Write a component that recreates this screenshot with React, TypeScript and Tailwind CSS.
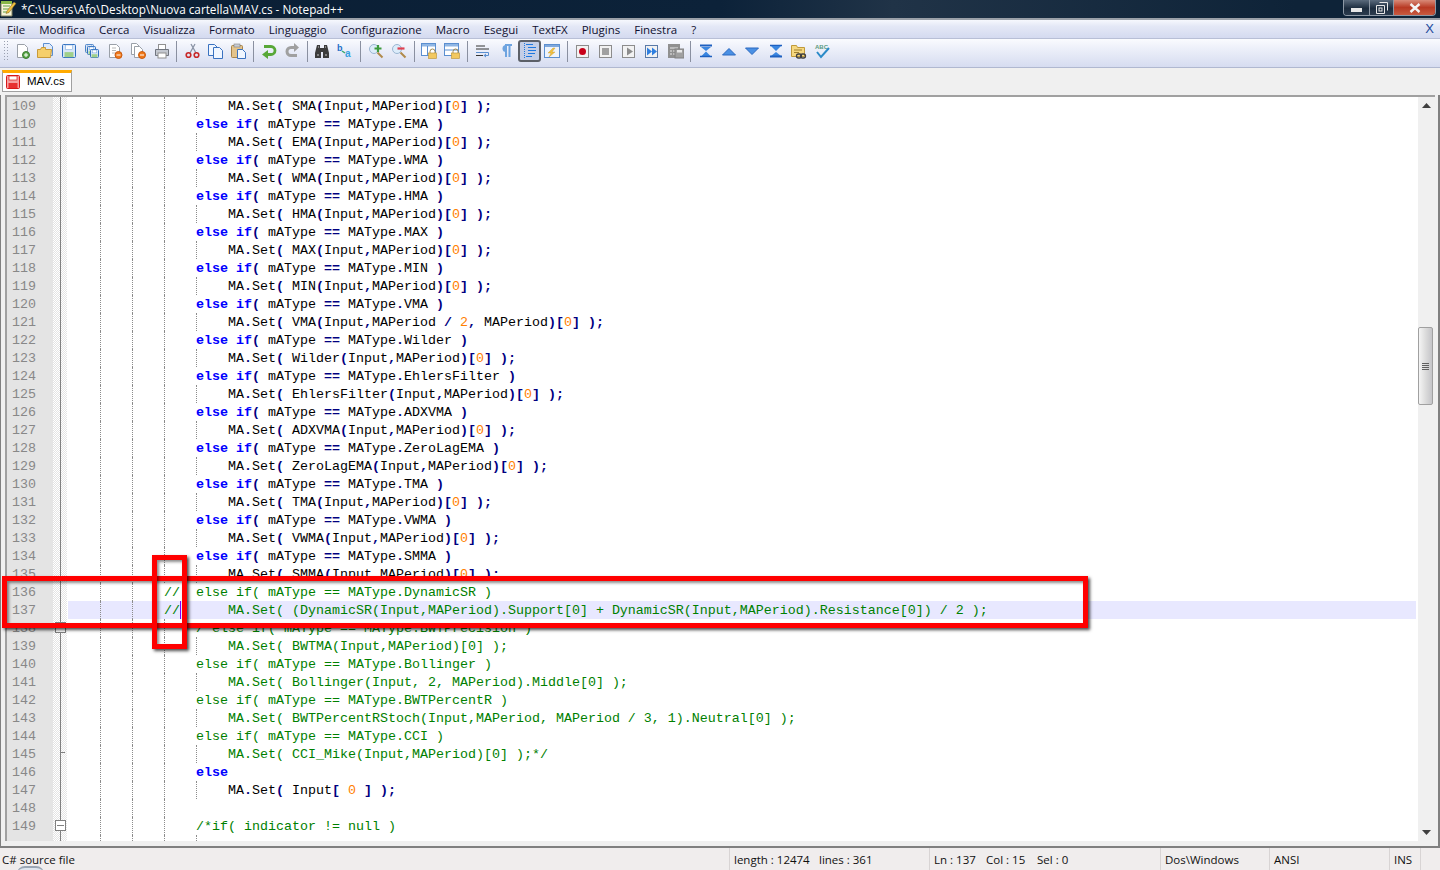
import type { ReactNode } from 'react';

const menus = ['File', 'Modifica', 'Cerca', 'Visualizza', 'Formato', 'Linguaggio', 'Configurazione', 'Macro', 'Esegui', 'TextFX', 'Plugins', 'Finestra', '?'];

type Kind = 'code' | 'comment';
interface Line {
  n: number;
  text: string;
  kind?: Kind;
}

const setLine = (s: string) => `                    MA.Set( ${s} );`;
const elseLine = (s: string) => `                else if( mAType == MAType.${s} )`;

const pairs: [string, string][] = [
  ['EMA', 'EMA(Input,MAPeriod)[0]'],
  ['WMA', 'WMA(Input,MAPeriod)[0]'],
  ['HMA', 'HMA(Input,MAPeriod)[0]'],
  ['MAX', 'MAX(Input,MAPeriod)[0]'],
  ['MIN', 'MIN(Input,MAPeriod)[0]'],
  ['VMA', 'VMA(Input,MAPeriod / 2, MAPeriod)[0]'],
  ['Wilder', 'Wilder(Input,MAPeriod)[0]'],
  ['EhlersFilter', 'EhlersFilter(Input,MAPeriod)[0]'],
  ['ADXVMA', 'ADXVMA(Input,MAPeriod)[0]'],
  ['ZeroLagEMA', 'ZeroLagEMA(Input,MAPeriod)[0]'],
  ['TMA', 'TMA(Input,MAPeriod)[0]'],
  ['VWMA', 'VWMA(Input,MAPeriod)[0]'],
  ['SMMA', 'SMMA(Input,MAPeriod)[0]'],
];

const lines: Line[] = [{ n: 109, text: setLine('SMA(Input,MAPeriod)[0]') }];
pairs.forEach(([name, call], i) => {
  lines.push({ n: 110 + i * 2, text: elseLine(name) });
  lines.push({ n: 111 + i * 2, text: setLine(call) });
});
lines.push(
  { n: 136, text: '            //  else if( mAType == MAType.DynamicSR )', kind: 'comment' },
  { n: 137, text: '            //      MA.Set( (DynamicSR(Input,MAPeriod).Support[0] + DynamicSR(Input,MAPeriod).Resistance[0]) / 2 );', kind: 'comment' },
  { n: 138, text: '                /*else if( mAType == MAType.BWTPrecision )', kind: 'comment' },
  { n: 139, text: setLine('BWTMA(Input,MAPeriod)[0]'), kind: 'comment' },
  { n: 140, text: elseLine('Bollinger'), kind: 'comment' },
  { n: 141, text: setLine('Bollinger(Input, 2, MAPeriod).Middle[0]'), kind: 'comment' },
  { n: 142, text: elseLine('BWTPercentR'), kind: 'comment' },
  { n: 143, text: setLine('BWTPercentRStoch(Input,MAPeriod, MAPeriod / 3, 1).Neutral[0]'), kind: 'comment' },
  { n: 144, text: elseLine('CCI'), kind: 'comment' },
  { n: 145, text: setLine('CCI_Mike(Input,MAPeriod)[0]') + '*/', kind: 'comment' },
  { n: 146, text: '                else' },
  { n: 147, text: '                    MA.Set( Input[ 0 ] );' },
  { n: 148, text: '' },
  { n: 149, text: '                /*if( indicator != null )', kind: 'comment' },
  { n: 150, text: '' },
);

function CodeText({ line }: { line: Line }) {
  if (line.kind === 'comment') {
    return <span className="text-[#008000]">{line.text}</span>;
  }
  const parts = line.text.split(/(\belse\b|\bif\b|[()[\],;.=+/]+|\b\d+\b)/);
  return (
    <>
      {parts.map((p, i) => {
        if (p === 'else' || p === 'if') return <span key={i} className="font-bold text-[#0000ff]">{p}</span>;
        if (/^\d+$/.test(p)) return <span key={i} className="text-[#ff8000]">{p}</span>;
        if (/^[()[\],;.=+/]+$/.test(p)) return <span key={i} className="font-bold text-[#000080]">{p}</span>;
        return <span key={i} className="text-black">{p}</span>;
      })}
    </>
  );
}

function Guide({ at }: { at: 32 | 64 | 96 | 128 }) {
  const left = { 32: 'left-[32px]', 64: 'left-[64px]', 96: 'left-[96px]', 128: 'left-[128px]' }[at];
  return <span className={`absolute top-0 h-full border-l border-dotted border-[#8c8c8c] ${left}`} />;
}

function Row({ line }: { line: Line }) {
  const deep = line.text.startsWith('                    ') || line.n === 150;
  const current = line.n === 137;
  return (
    <div className="flex h-[18px] shrink-0 leading-[20px]">
      <div className="w-[46px] shrink-0 bg-[#e4e4e4] pl-[5px] text-[#888888]">{line.n < 150 ? line.n : ''}</div>
      <div className="relative w-[14px] shrink-0 bg-[repeating-conic-gradient(#e4e4e4_0_25%,#ffffff_0_50%)] bg-[length:2px_2px]">
        <span className="absolute left-[7px] top-0 h-full w-px bg-[#808080]" />
        {line.n === 145 && <span className="absolute left-[7px] top-[7px] h-px w-[5px] bg-[#808080]" />}
        {(line.n === 138 || line.n === 149) && (
          <span className="absolute left-[2px] top-[3px] flex h-[11px] w-[11px] items-center justify-center border border-[#808080] bg-white">
            <span className="h-px w-[7px] bg-[#808080]" />
          </span>
        )}
      </div>
      <div className="w-px shrink-0 bg-white" />
      <div className={`relative mr-[2px] flex-1 whitespace-pre ${current ? 'bg-[#e8e8ff]' : ''}`}>
        <Guide at={32} />
        <Guide at={64} />
        {line.n !== 136 && line.n !== 137 && <Guide at={96} />}
        {deep && <Guide at={128} />}
        <CodeText line={line} />
        {current && <span className="absolute left-[112px] top-0 h-full w-px bg-[#8000ff]" />}
      </div>
    </div>
  );
}

function Svg({ children }: { children: ReactNode }) {
  return (
    <svg width="16" height="16" viewBox="0 0 16 16" fill="none">
      {children}
    </svg>
  );
}

const Doc = ({ x = 2, y = 1, w = 9, h = 12, c = '#9aa0a8', f = '#ffffff' }) => (
  <path d={`M${x + 0.5} ${y + 0.5}h${w - 3}l3 3v${h - 3}h-${w}z`} fill={f} stroke={c} />
);
const Disk = ({ x = 1, y = 1, s = 14 }) => (
  <g>
    <rect x={x + 0.5} y={y + 0.5} width={s - 1} height={s - 1} rx="1" fill="#d8e6f8" stroke="#2f6fc0" />
    <rect x={x + s * 0.25} y={y + 1} width={s * 0.5} height={s * 0.32} fill="#ffffff" stroke="#6f9fd8" strokeWidth="0.5" />
    <rect x={x + s * 0.18} y={y + s * 0.58} width={s * 0.64} height={s * 0.36} fill="#9fd08a" />
  </g>
);
const Lock = () => (
  <g>
    <path d="M9 10V8.5a2.5 2.5 0 0 1 5 0V10" stroke="#a08850" fill="none" />
    <rect x="7.5" y="10" width="8" height="5.5" fill="#f2c860" stroke="#c09a40" strokeWidth="0.7" />
  </g>
);
const Glass = ({ children }: { children: ReactNode }) => (
  <g>
    <circle cx="6" cy="6" r="4.5" fill="#dcecfa" stroke="#9bb6d2" />
    <path d="M9.5 9.5l5 5" stroke="#b08a4a" strokeWidth="2" />
    {children}
  </g>
);
const MacroBox = ({ children, c = '#8c8c8c' }: { children: ReactNode; c?: string }) => (
  <g>
    <rect x="1.5" y="2.5" width="12" height="12" fill="#f2f2f2" stroke={c} />
    {children}
  </g>
);

const icons: Record<string, ReactNode> = {
  new: (<Svg><Doc x={3} y={1} w={10} h={13} /><circle cx="12" cy="12" r="3.5" fill="#5aa848" stroke="#3a7a30" /><path d="M10 12h4M12 10v4" stroke="#fff" /></Svg>),
  open: (<Svg><Doc x={6} y={0} w={9} h={12} c="#5b8fd0" f="#dfeafa" /><path d="M.5 6.5h3l1-2h4v2h6l-1 8H.5z" fill="#f6cf6b" stroke="#c89a3a" /></Svg>),
  save: (<Svg><Disk /></Svg>),
  saveAll: (<Svg><g opacity="0.85"><Disk x={1} y={1} s={9} /></g><Disk x={3} y={3} s={9} /><Disk x={6} y={6} s={9} /></Svg>),
  close: (<Svg><Doc x={2} y={1} w={10} h={13} /><path d="M5 5h4M5 7.5h4M5 10h3" stroke="#b8b8b8" /><circle cx="11.5" cy="12" r="3.5" fill="#f07818" stroke="#c85a10" /><path d="M9.5 12h4" stroke="#fff" /></Svg>),
  closeAll: (<Svg><Doc x={1} y={0} w={8} h={11} /><Doc x={4} y={3} w={8} h={11} /><circle cx="12" cy="12" r="3.5" fill="#f07818" stroke="#c85a10" /><path d="M10 12h4" stroke="#fff" /></Svg>),
  print: (<Svg><rect x="4.5" y="1.5" width="7" height="5" fill="#fff" stroke="#909090" /><path d="M1.5 6.5h13v6h-13z" fill="#c4c8d0" stroke="#70757f" /><rect x="4" y="10" width="8" height="5" fill="#fff" stroke="#909090" /></Svg>),
  cut: (<Svg><path d="M11 1L6 10M7 1l5 9" stroke="#8a93a5" strokeWidth="1.3" /><circle cx="4.5" cy="12" r="2.3" stroke="#c82828" strokeWidth="1.6" /><circle cx="12.5" cy="12" r="2.3" stroke="#c82828" strokeWidth="1.6" /></Svg>),
  copy: (<Svg><Doc x={1} y={1} w={9} h={11} c="#3a72c0" f="#f0f6ff" /><Doc x={6} y={4} w={9} h={11} c="#3a72c0" f="#f0f6ff" /></Svg>),
  paste: (<Svg><rect x="1.5" y="2.5" width="11" height="12" rx="1" fill="#e4c48c" stroke="#a8844a" /><rect x="4" y="1" width="6" height="3" fill="#c8ccd4" stroke="#808080" strokeWidth="0.6" /><Doc x={7} y={6} w={8} h={9} c="#3a72c0" f="#f0f6ff" /></Svg>),
  undo: (<Svg><path d="M3 3.500h7a4 4 0 0 1 0 8H6" stroke="#58a838" strokeWidth="2.800" /><path d="M7 7v9L1 11.500z" fill="#58a838" /></Svg>),
  redo: (<Svg><path d="M11 4.500H7a4 4 0 0 0 0 8h6" stroke="#a0a0a0" strokeWidth="3" /><path d="M10 0v9l5-4.500z" fill="#a0a0a0" /></Svg>),
  find: (<Svg><path d="M3 2h3v3h4V2h3l2 8v5H9V9H7v6H1v-5z" fill="#3c3c3c" /><path d="M3 12h2M11 12h2M4 4h1M11 4h1" stroke="#c8c8c8" /></Svg>),
  replace: (<Svg><text x="0" y="8" fontSize="9" fontWeight="700" fill="#1c6fc8" fontFamily="Liberation Sans">b</text><text x="8" y="14" fontSize="10" fontWeight="700" fill="#38a0e0" fontFamily="Liberation Sans">a</text><path d="M5 8l3 2" stroke="#38a870" strokeWidth="1.500" /></Svg>),
  zoomIn: (<Svg><Glass><path d="M6.5 5.5h7M10 2v7" stroke="#3c9a3c" strokeWidth="2.2" /></Glass></Svg>),
  zoomOut: (<Svg><Glass><path d="M6.5 5.5h7" stroke="#e04050" strokeWidth="2.2" /></Glass></Svg>),
  syncV: (<Svg><rect x="0.5" y="0.5" width="14" height="12" fill="#fff" stroke="#5b8fd0" /><rect x="1" y="1" width="13" height="2.5" fill="#8fb6e4" /><path d="M6.5 3v9" stroke="#5b8fd0" /><Lock /></Svg>),
  syncH: (<Svg><rect x="0.5" y="0.5" width="14" height="12" fill="#fff" stroke="#5b8fd0" /><rect x="1" y="1" width="13" height="2.5" fill="#8fb6e4" /><path d="M1 7h13" stroke="#5b8fd0" /><Lock /></Svg>),
  wrap: (<Svg><path d="M1 3h9M1 6h13M1 12.500h7" stroke="#333" /><path d="M1 9.500h12.500v3H10" stroke="#5b8fd0" /><path d="M11 10.500v4L8.500 12.500z" fill="#5b8fd0" /></Svg>),
  pilcrow: (<Svg><path d="M7 2h7M8 2v12M11.500 2v12" stroke="#6ea4e0" strokeWidth="2" /><path d="M8 2a3.500 3.500 0 0 0 0 7z" fill="#6ea4e0" /></Svg>),
  guide: (<Svg><path d="M5 1.500h7M7 4.500h8M7 7.500h8M7 10.500h7M5 13.500h6" stroke="#1e78e0" strokeWidth="1.2" /><path d="M3.500 0v16" stroke="#1e78e0" strokeDasharray="1 1" /></Svg>),
  lang: (<Svg><rect x="0.5" y="1.5" width="15" height="13" fill="#eef4fc" stroke="#5b8fd0" /><rect x="1" y="2" width="14" height="2" fill="#7fa8dc" /><path d="M9 5L4 10h3l-2 4 6-5H8l3-4z" fill="#f0c040" stroke="#c89a30" strokeWidth="0.4" /></Svg>),
  rec: (<Svg><MacroBox><circle cx="7.500" cy="8.500" r="3.500" fill="#c80018" /></MacroBox></Svg>),
  stop: (<Svg><MacroBox><rect x="4" y="5" width="7" height="7" fill="#a0a0a0" /></MacroBox></Svg>),
  play: (<Svg><MacroBox><path d="M6 4.500v8l6-4z" fill="#8c8c8c" /></MacroBox></Svg>),
  playMany: (<Svg><MacroBox c="#5a7aa8"><path d="M3 4.500v8l5-4zM8 4.500v8l5-4z" fill="#2f7fe0" /></MacroBox></Svg>),
  saveMacro: (<Svg><rect x="0" y="1" width="12" height="14" fill="#909090" /><path d="M2 5h8M2 8h2M5 8h2M2 11h2M5 11h2" stroke="#e8e8e8" /><rect x="7" y="6" width="9" height="9" fill="#a0a0a0" stroke="#808080" /><rect x="9" y="7" width="5" height="2.500" fill="#e8e8e8" /></Svg>),
  first: (<Svg><path d="M2 2.500h12" stroke="#1e60c0" strokeWidth="2" /><path d="M3 4l5 4 5-4zM3 13.500l5-5 5 5z" fill="#3a86e0" /><path d="M2 13.500h12" stroke="#1e60c0" strokeWidth="1.500" /></Svg>),
  up: (<Svg><path d="M1.500 12L8 5.500l6.500 6.500z" fill="#4a90e4" stroke="#2a68c0" /></Svg>),
  down: (<Svg><path d="M1.500 5L8 11.500 14.500 5z" fill="#4a90e4" stroke="#2a68c0" /></Svg>),
  last: (<Svg><path d="M2 2.500h12" stroke="#1e60c0" strokeWidth="1.500" /><path d="M3 3l5 5 5-5zM3 13l5-4 5 4z" fill="#3a86e0" /><path d="M2 13.500h12" stroke="#1e60c0" strokeWidth="2" /></Svg>),
  folderLink: (<Svg><path d="M.5 2.500h5l1 2h7v9h-13z" fill="#f6d880" stroke="#c09a3a" /><path d="M3 7h8M3 9.500h5" stroke="#a08030" /><rect x="5.500" y="11" width="5" height="4" rx="2" stroke="#404040" strokeWidth="1.300" /><rect x="9.500" y="11" width="5" height="4" rx="2" stroke="#404040" strokeWidth="1.300" /></Svg>),
  spell: (<Svg><text x="1" y="6" fontSize="6" fontWeight="700" fill="#5a9a80" fontFamily="Liberation Sans">ABC</text><path d="M3 9l4 5 8-9" stroke="#2a8ac8" strokeWidth="2" /></Svg>),
};

const toolbar = ['new', 'open', 'save', 'saveAll', 'close', 'closeAll', 'print', '|', 'cut', 'copy', 'paste', '|', 'undo', 'redo', '|', 'find', 'replace', '|', 'zoomIn', 'zoomOut', '|', 'syncV', 'syncH', '|', 'wrap', 'pilcrow', 'guide', 'lang', '|', 'rec', 'stop', 'play', 'playMany', 'saveMacro', '|', 'first', 'up', 'down', 'last', 'folderLink', 'spell'];

function ScrollArrow({ down }: { down?: boolean }) {
  return (
    <div className="flex h-[17px] items-center justify-center">
      <svg width="9" height="5" viewBox="0 0 9 5" className={down ? 'rotate-180' : ''}>
        <path d="M0 5L4.500 0 9 5z" fill="#404040" />
      </svg>
    </div>
  );
}

export default function App() {
  return (
    <div className="relative flex h-[870px] w-[1440px] flex-col overflow-hidden bg-[#f0f0f0] font-['Open_Sans',sans-serif] text-[11.500px] text-black">
      {/* Title bar */}
      <div className="flex h-[20px] shrink-0 items-start border-b-2 border-[#9aa0a8] bg-[linear-gradient(90deg,#0a1e34,#0c2239_50%,#203347_62%,#0e2338_90%)]">
        <svg width="17" height="17" viewBox="0 0 17 17" className="shrink-0">
          <path d="M1 3h11v13H1z" fill="#f8f4d8" stroke="#808060" />
          <path d="M3 6h7M3 9h7M3 12h6" stroke="#60a040" />
          <path d="M1 1h11v3H1z" fill="#88b848" />
          <path d="M7 11l7-9 2 1.500-7 9-3 1z" fill="#f0c040" stroke="#806020" strokeWidth="0.500" />
        </svg>
        <span className="ml-[4px] text-[11.750px] leading-[19px] text-white">*C:\Users\Afo\Desktop\Nuova cartella\MAV.cs - Notepad++</span>
        <div className="ml-auto mr-[4px] flex h-[16px] overflow-hidden rounded-b-[4px] border border-t-0 border-[#8d98a5]">
          <div className="flex w-[25px] items-end justify-center bg-[linear-gradient(#5a6a7c,#1c2c3e_55%,#2c3c4e)] pb-[3px]">
            <span className="h-[4px] w-[11px] bg-[#e8e8e8]" />
          </div>
          <div className="flex w-[25px] items-center justify-center border-x border-[#8d98a5] bg-[linear-gradient(#5a6a7c,#1c2c3e_55%,#2c3c4e)]">
            <svg width="12" height="12" viewBox="0 0 12 12">
              <path d="M3.500.500h8v8M.500 3.500h8v8h-8z" fill="none" stroke="#e8e8e8" />
              <rect x="3" y="6" width="3" height="3" fill="none" stroke="#e8e8e8" />
            </svg>
          </div>
          <div className="flex w-[41px] items-center justify-center bg-[linear-gradient(#d88a78,#b83a24_50%,#c85a40)]">
            <svg width="12" height="10" viewBox="0 0 12 10">
              <path d="M1.500 1l9 8M10.500 1l-9 8" stroke="#f4f4f4" strokeWidth="2.400" />
            </svg>
          </div>
        </div>
      </div>

      {/* Menu */}
      <div className="flex h-[19px] shrink-0 items-center gap-[14px] border-b border-[#b8bfd6] bg-[linear-gradient(#f6f8fd,#e4e8f6_35%,#d4daf0)] pl-[7px]">
        {menus.map((m) => (
          <span key={m} className="leading-[19px] text-[#101030]">{m}</span>
        ))}
        <span className="ml-auto mr-[6px] font-['Liberation_Sans',sans-serif] text-[13px] text-[#1c4a9c]">X</span>
      </div>

      {/* Toolbar */}
      <div className="flex h-[29px] shrink-0 items-center border-b border-[#b0b8d0] bg-[linear-gradient(#fafbfe,#eef1fa_30%,#d6dcf0)] pb-[4px] pl-[3px]">
        <span className="mr-[2.500px] h-[22px] w-[5px] bg-[radial-gradient(#9aa0b0_40%,transparent_45%)] bg-[length:3px_3px]" />
        {toolbar.map((t, i) =>
          t === '|' ? (
            <span key={i} className="mx-[3px] h-[21px] w-px shrink-0 bg-[#8a90a0]" />
          ) : (
            <span
              key={i}
              className={`flex h-[22px] w-[23.250px] shrink-0 items-center justify-center ${t === 'guide' ? 'rounded-[3px] border-2 border-[#5c6068] bg-[#c4cee6]' : ''}`}
            >
              {icons[t]}
            </span>
          ),
        )}
      </div>

      {/* Tabs */}
      <div className="flex h-[27px] shrink-0 items-start pl-[2px] pt-[2px]">
        <div className="flex h-[22px] w-[70px] items-center border-x border-b border-[#a0a0a0] border-t-[3px] border-t-[#fa0] bg-white pl-[3px]">
          <svg width="14" height="14" viewBox="0 0 14 14">
            <rect x="0.500" y="0.500" width="13" height="13" rx="1" fill="#f6a0a0" stroke="#d81818" />
            <rect x="3" y="1" width="8" height="4" fill="#fff" stroke="#d81818" strokeWidth="0.700" />
            <rect x="2.500" y="8" width="9" height="5" fill="#e83030" />
          </svg>
          <span className="ml-[7px] font-['Liberation_Sans',sans-serif] text-[11.500px] leading-none">MAV.cs</span>
        </div>
      </div>

      {/* Editor */}
      <div className="flex h-[753px] shrink-0 flex-col border-x border-b-2 border-[#808080] border-r-2 bg-[#f0f0f0] pl-[4px] pr-[3px]">
        <div className="flex h-[746px] border-l-2 border-t-2 border-[#a0a0a0]">
          <div className="h-[744px] flex-1 overflow-hidden bg-white font-['Liberation_Mono',monospace] text-[13.330px]">
            {lines.map((line) => (
              <Row key={line.n} line={line} />
            ))}
          </div>
          <div className="flex h-[744px] w-[17px] shrink-0 flex-col bg-[#f0f0f0]">
            <ScrollArrow />
            <div className="flex-1">
              <div className="mt-[213px] flex h-[78px] w-[15px] flex-col items-center justify-center gap-px rounded-[2px] border border-[#a0a0a0] bg-[linear-gradient(90deg,#f4f4f4,#dcdcdc_50%,#c4c4c8)]">
                <span className="h-px w-[7px] bg-[#606060]" />
                <span className="h-px w-[7px] bg-[#606060]" />
                <span className="h-px w-[7px] bg-[#606060]" />
                <span className="h-px w-[7px] bg-[#606060]" />
              </div>
            </div>
            <ScrollArrow down />
          </div>
        </div>
      </div>

      {/* Status bar */}
      <div className="flex h-[22px] shrink-0 items-center bg-[#f0eded] leading-[23px] text-[#101010]">
        <span className="w-[729px] pl-[2px]">C# source file</span>
        <span className="flex h-full w-[200px] border-l border-[#d8d4d4] pl-[4px]">
          <span className="w-[85px]">length : 12474</span>
          <span>lines : 361</span>
        </span>
        <span className="flex h-full w-[231px] border-l border-[#d8d4d4] pl-[4px]">
          <span className="w-[52px]">Ln : 137</span>
          <span className="w-[51px]">Col : 15</span>
          <span>Sel : 0</span>
        </span>
        <span className="h-full w-[109px] border-l border-[#d8d4d4] pl-[4px]">Dos\Windows</span>
        <span className="h-full w-[120px] border-l border-[#d8d4d4] pl-[4px]">ANSI</span>
        <span className="h-full w-[31px] border-l border-[#d8d4d4] pl-[4px]">INS</span>
        <span className="h-full border-l border-[#d8d4d4]" />
      </div>
      <span className="absolute left-[17px] top-[866px] h-[8px] w-[27px] rounded-t-full border-t-2 border-[#9aa6b4] bg-[#dfe6ee]" />

      {/* Red markup drawn over the screenshot */}
      <div className="absolute left-[2px] top-[576px] h-[52px] w-[1086px] border-[5px] border-[#ff0000] shadow-[2px_2px_3px_rgba(0,0,0,0.7),inset_2px_2px_3px_rgba(0,0,0,0.45)]" />
      <div className="absolute left-[152px] top-[555px] h-[94px] w-[35px] border-[5px] border-[#ff0000] shadow-[2px_2px_3px_rgba(0,0,0,0.7),inset_2px_2px_3px_rgba(0,0,0,0.45)]" />
    </div>
  );
}
